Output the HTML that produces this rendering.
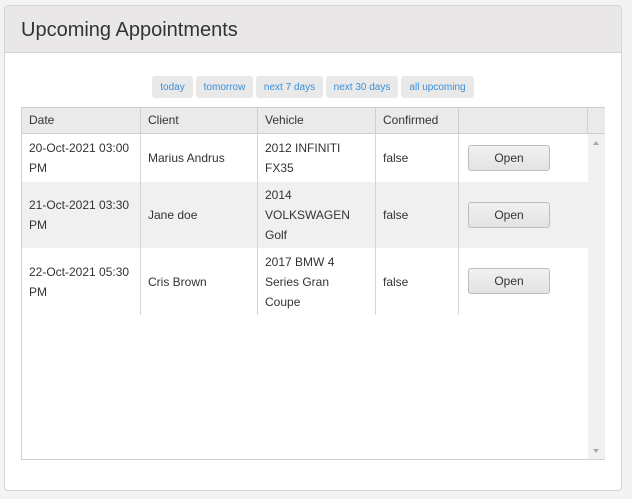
<!DOCTYPE html>
<html><head><style>
*{box-sizing:border-box;margin:0;padding:0}
body{width:632px;height:499px;background:#f3f3f3;font-family:"Liberation Sans",Arial,sans-serif;position:relative;overflow:hidden}
.panel{position:absolute;left:4px;top:5px;width:618px;height:486px;background:#fff;border:1px solid #d6d6d6;border-radius:4px;overflow:hidden}
.hdr{height:47px;background:#e9e7e8;border-bottom:1px solid #d4d4d4;padding-left:16px;font-size:20px;color:#333;line-height:48px}
.btn{position:absolute;top:70px;height:22px;background:#e9e9e9;border-radius:3px;color:#3a8fd8;font-size:10px;line-height:23px;text-align:center}
.tbl{position:absolute;left:16px;top:101px;width:584px;height:353px;border:1px solid #cfcfcf}
.th{position:absolute;top:0;height:26px;background:#ebeaea;border-bottom:1px solid #cfcfcf;border-right:1px solid #cfcfcf;font-size:12px;color:#333;line-height:25px;padding-left:7px}
.row{position:absolute;left:0;width:566px}
.c{position:absolute;top:0;height:100%;border-right:1px solid #d4d4d4;font-size:12px;color:#333;line-height:20px;padding-left:7px;padding-right:12px;display:flex;align-items:center}
.c.d{padding-right:2px}
.ob{position:absolute;left:446px;width:82px;height:26px;border:1px solid #bdbdbd;border-radius:3px;background:linear-gradient(#f1f1f1,#e3e3e3);font-size:12px;color:#333;text-align:center;line-height:24px}
.sb{position:absolute;left:566px;top:26px;width:17px;height:325px;background:#f0f0f0}
</style></head><body>
<div class="panel">
<div class="hdr">Upcoming Appointments</div>
<div class="btn" style="left:147px;width:41px">today</div>
<div class="btn" style="left:191px;width:57px">tomorrow</div>
<div class="btn" style="left:251px;width:67px">next 7 days</div>
<div class="btn" style="left:321px;width:72px">next 30 days</div>
<div class="btn" style="left:396px;width:73px">all upcoming</div>
<div class="tbl">
<div class="th" style="left:0;width:119px">Date</div>
<div class="th" style="left:119px;width:117px">Client</div>
<div class="th" style="left:236px;width:118px">Vehicle</div>
<div class="th" style="left:354px;width:83px">Confirmed</div>
<div class="th" style="left:437px;width:129px"></div>
<div class="th" style="left:566px;width:17px;border-right:none"></div>
<div class="row" style="top:26px;height:48px;background:#fff">
<div class="c d" style="left:0;width:119px">20-Oct-2021 03:00 PM</div>
<div class="c" style="left:119px;width:117px">Marius Andrus</div>
<div class="c" style="left:236px;width:118px">2012 INFINITI FX35</div>
<div class="c" style="left:354px;width:83px">false</div>
<div class="ob" style="top:11px">Open</div>
</div>
<div class="row" style="top:74px;height:66px;background:#f0f0f0">
<div class="c d" style="left:0;width:119px">21-Oct-2021 03:30 PM</div>
<div class="c" style="left:119px;width:117px">Jane doe</div>
<div class="c" style="left:236px;width:118px">2014 VOLKSWAGEN Golf</div>
<div class="c" style="left:354px;width:83px">false</div>
<div class="ob" style="top:20px">Open</div>
</div>
<div class="row" style="top:140px;height:67px;background:#fff">
<div class="c d" style="left:0;width:119px">22-Oct-2021 05:30 PM</div>
<div class="c" style="left:119px;width:117px">Cris Brown</div>
<div class="c" style="left:236px;width:118px">2017 BMW 4 Series Gran Coupe</div>
<div class="c" style="left:354px;width:83px">false</div>
<div class="ob" style="top:20px">Open</div>
</div>
<div class="sb">
<div style="position:absolute;left:5px;top:7px;border:3.5px solid transparent;border-bottom:4px solid #a8a8a8;border-top:none"></div>
<div style="position:absolute;left:5px;bottom:6px;border:3.5px solid transparent;border-top:4px solid #a8a8a8;border-bottom:none"></div>
</div>
</div>
</div>
</body></html>
